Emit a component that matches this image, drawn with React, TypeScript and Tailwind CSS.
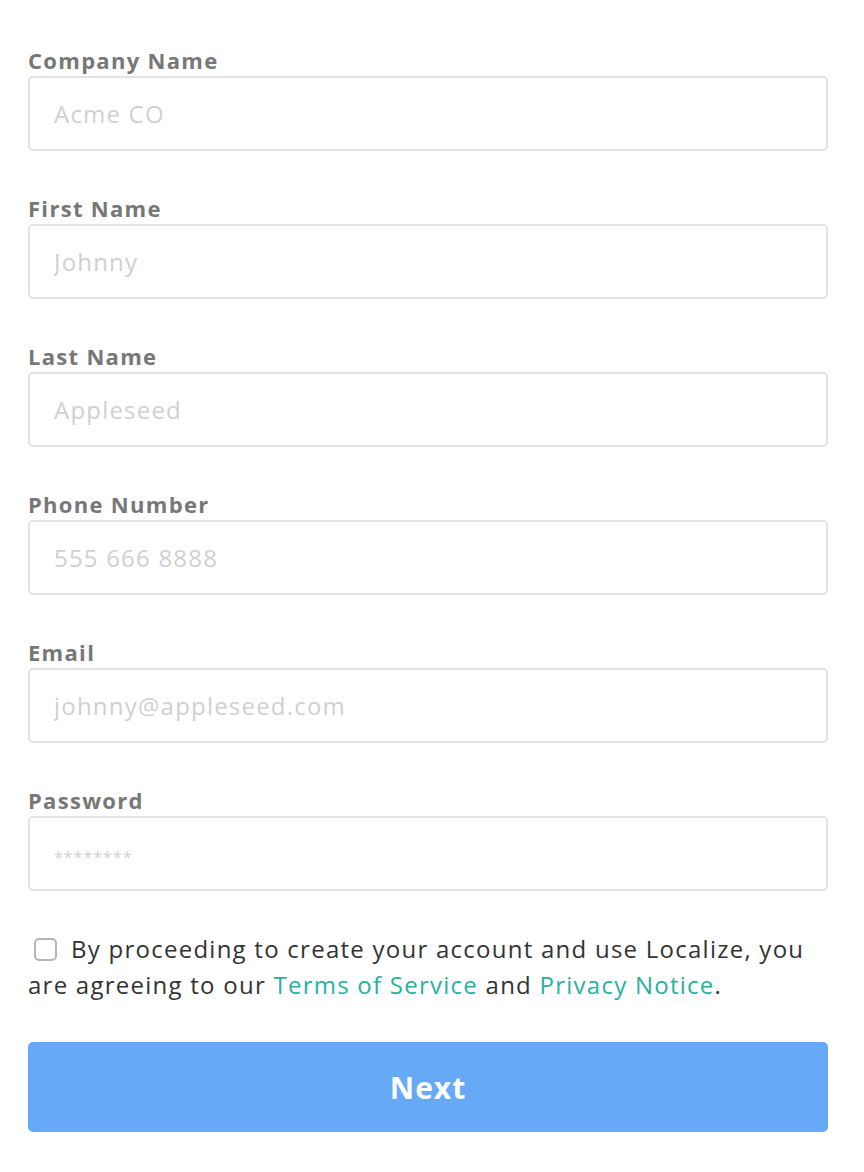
import React, { useState } from 'react';

const FIELDS = [
  { label: 'Company Name', placeholder: 'Acme CO', type: 'text' },
  { label: 'First Name', placeholder: 'Johnny', type: 'text' },
  { label: 'Last Name', placeholder: 'Appleseed', type: 'text' },
  { label: 'Phone Number', placeholder: '555 666 8888', type: 'tel' },
  { label: 'Email', placeholder: 'johnny@appleseed.com', type: 'email' },
  { label: 'Password', placeholder: '********', type: 'password' },
];

export default function App() {
  const [agreed, setAgreed] = useState(false);

  return (
    <main className="w-full min-h-screen bg-white px-[28px] pt-[49px] font-['Open_Sans',sans-serif]">
      <form className="w-[800px] flex flex-col gap-[46px]" onSubmit={e => e.preventDefault()}>
        {FIELDS.map(f => (
          <div key={f.label} className="flex flex-col gap-[5px]">
            <label className="text-[22px] leading-[22px] font-bold tracking-[1.3px] text-[#777777]">{f.label}</label>
            <input
              type={f.type === 'password' ? 'text' : f.type}
              placeholder={f.placeholder}
              className={`h-[75px] w-full rounded-[5px] border-2 border-[#e3e3e3] px-[24px] text-[24px] tracking-[1.2px] text-[#333] outline-none placeholder:text-[#d0d0d0] ${
                f.type === 'password' ? 'placeholder:text-[16px] placeholder:tracking-[1px]' : ''
              }`}
            />
          </div>
        ))}
      </form>

      <p className="w-[800px] mt-[40px] text-[24px] leading-[36px] tracking-[1.25px] text-[#333333]">
        <span className="inline-flex align-[-3px] mr-[14px] ml-[6px]">
          <input
            type="checkbox"
            checked={agreed}
            onChange={e => setAgreed(e.target.checked)}
            className="appearance-none w-[23px] h-[23px] rounded-[5px] border-2 border-[#b5b5b5] bg-white checked:bg-[#2bb09d] checked:border-[#2bb09d]"
          />
        </span>
        By proceeding to create your account and use Localize, you are agreeing to our{' '}
        <span className="text-[#2bb09d]">Terms of Service</span> and{' '}
        <span className="text-[#2bb09d]">Privacy Notice</span>.
      </p>

      <button
        type="button"
        className="mt-[39px] w-[800px] h-[90px] rounded-[5px] bg-[#66aaf7] text-white text-[30px] font-bold tracking-[1px]"
      >
        Next
      </button>
    </main>
  );
}
